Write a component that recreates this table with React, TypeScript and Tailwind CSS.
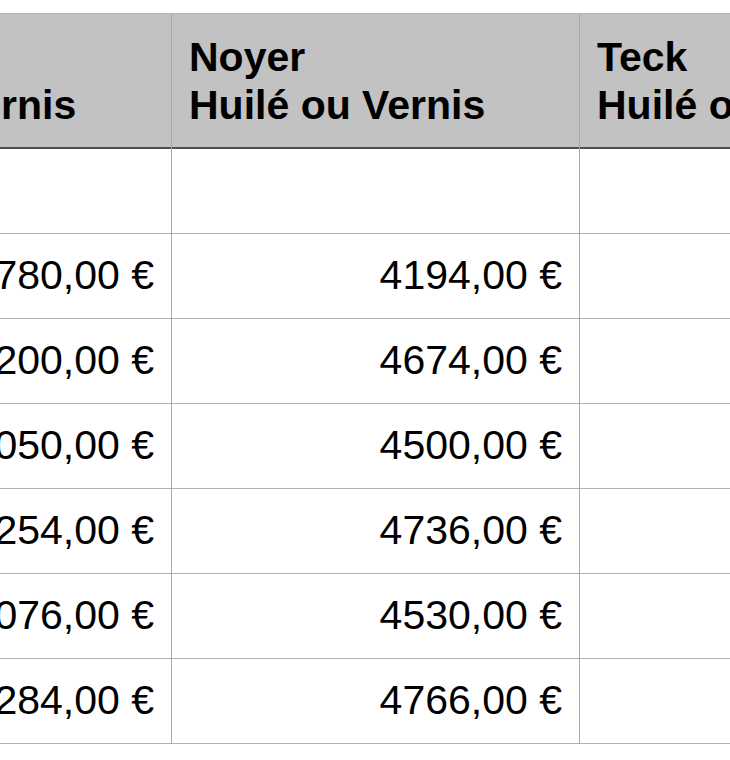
import React from "react";

const cols = [
  { top: "Chêne", bottom: "Huilé ou Vernis", values: ["", "3780,00 €", "4200,00 €", "4050,00 €", "4254,00 €", "4076,00 €", "4284,00 €"] },
  { top: "Noyer", bottom: "Huilé ou Vernis", values: ["", "4194,00 €", "4674,00 €", "4500,00 €", "4736,00 €", "4530,00 €", "4766,00 €"] },
  { top: "Teck", bottom: "Huilé ou Vernis", values: ["", "", "", "", "", "", ""] },
];

export default function App() {
  return (
    <div
      className="w-[730px] h-[760px] overflow-hidden bg-white"
      style={{ fontFamily: '"Liberation Sans", Arial, sans-serif' }}
    >
      <div className="pt-[13px] ml-[-237px] flex w-[1224px]">
        {cols.map((c, i) => (
          <div key={i} className={`w-[408px] shrink-0 flex flex-col ${i > 0 ? "border-l border-[#a8a8a8]" : ""}`}>
            <div className="h-[136px] bg-[#c2c2c2] border-t border-[#b4b4b4] border-b-2 border-b-[#4d4d4d] flex items-center px-[17px]">
              <div className="text-[41px] leading-[48px] font-bold text-black pt-[1px]">
                <div>{c.top}</div>
                <div>{c.bottom}</div>
              </div>
            </div>
            {c.values.map((v, j) => (
              <div
                key={j}
                className="h-[85px] border-b border-[#b0b0b0] flex items-center justify-end px-[17px] text-[41px] text-black"
              >
                {v}
              </div>
            ))}
          </div>
        ))}
      </div>
    </div>
  );
}
